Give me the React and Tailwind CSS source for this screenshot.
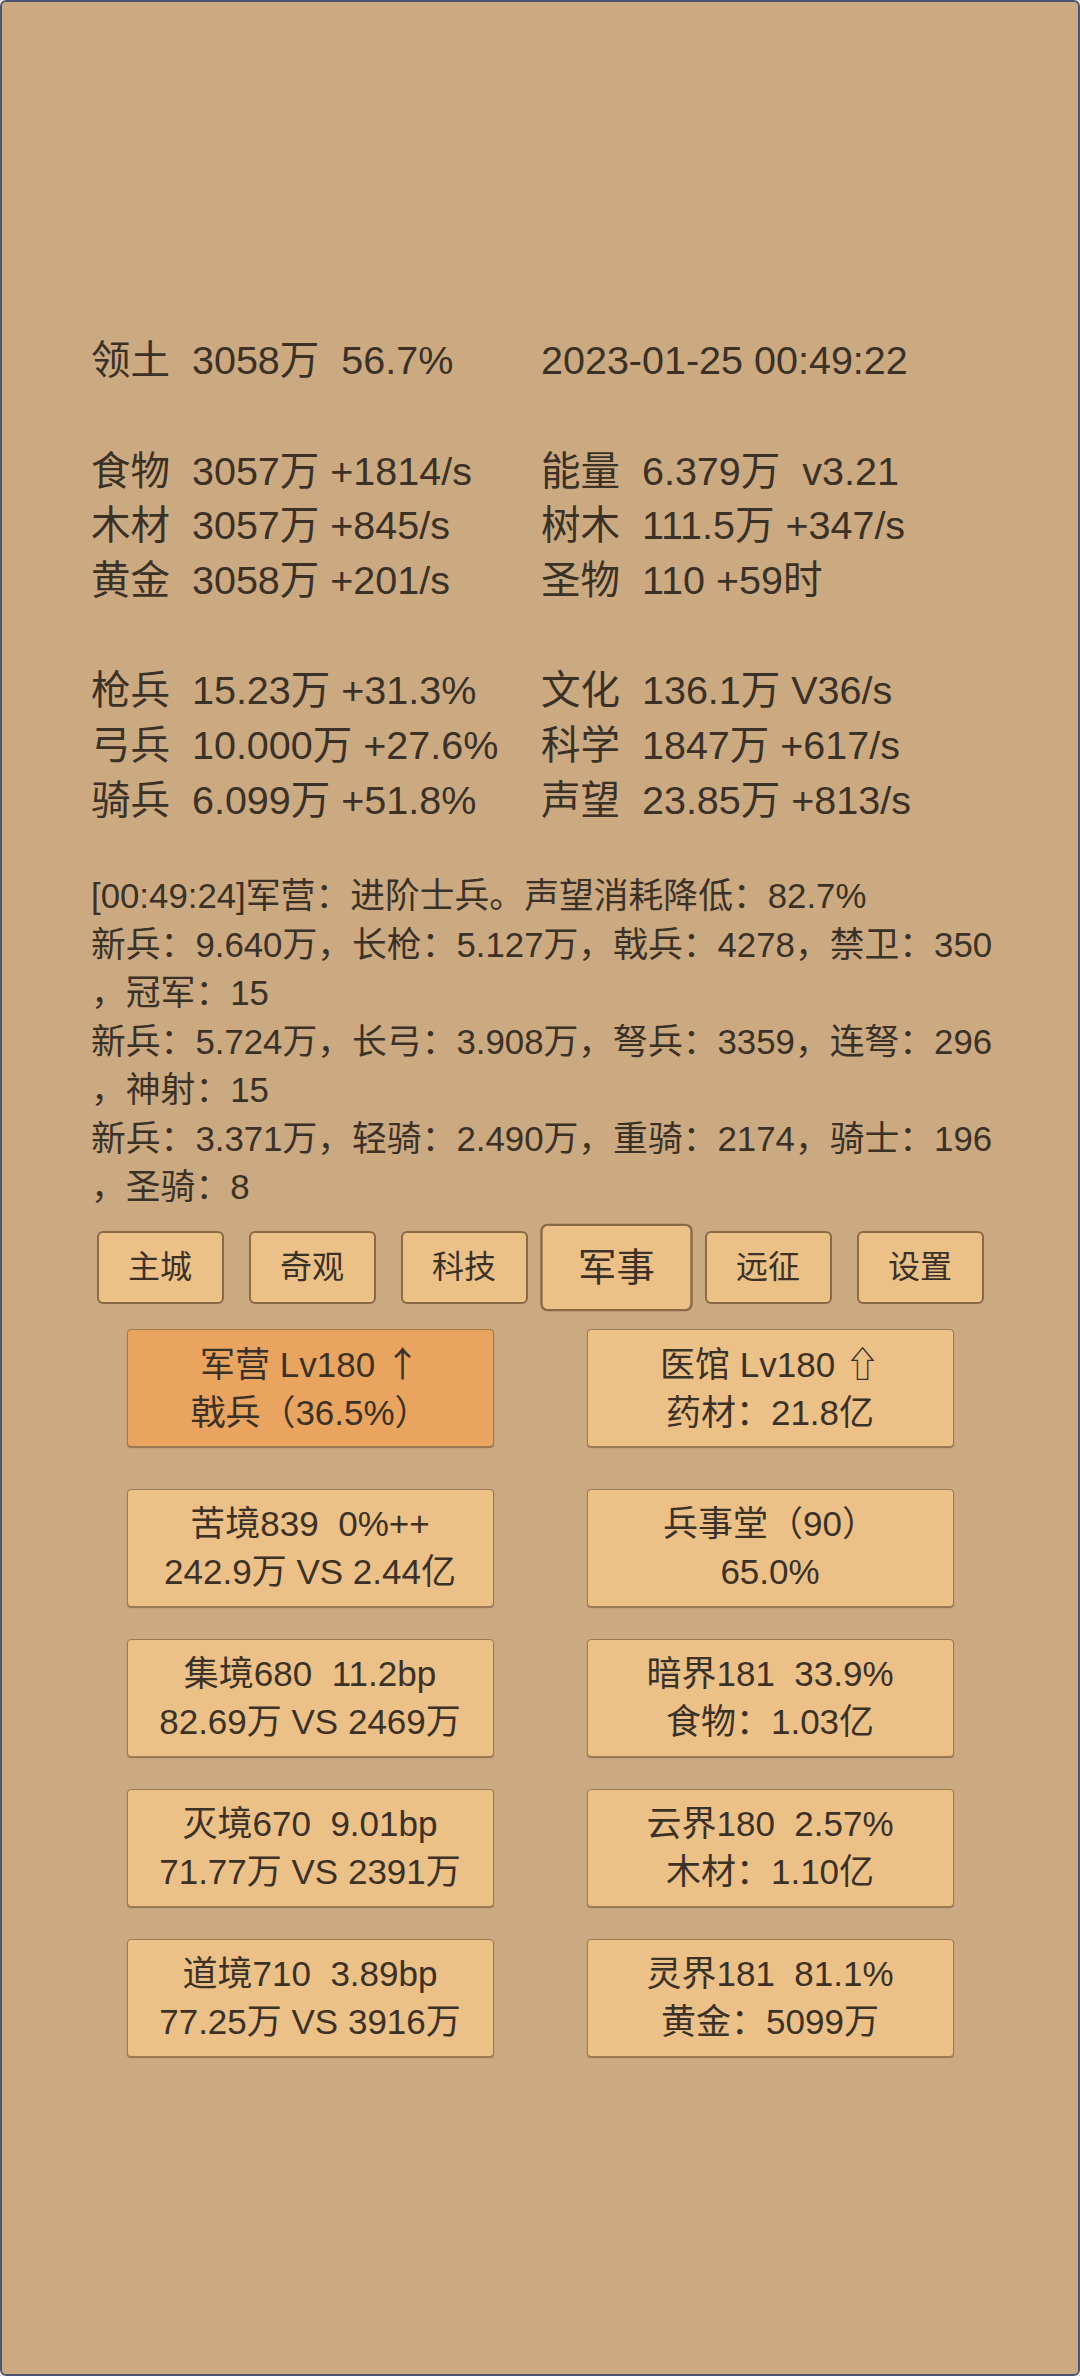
import React from 'react';

const font = { fontFamily: '"Liberation Sans", "Noto Sans CJK SC", sans-serif' };

const stats = [
  [['领土  3058万  56.7%', '2023-01-25 00:49:22']],
  [
    ['食物  3057万 +1814/s', '能量  6.379万  v3.21'],
    ['木材  3057万 +845/s', '树木  111.5万 +347/s'],
    ['黄金  3058万 +201/s', '圣物  110 +59时'],
  ],
  [
    ['枪兵  15.23万 +31.3%', '文化  136.1万 V36/s'],
    ['弓兵  10.000万 +27.6%', '科学  1847万 +617/s'],
    ['骑兵  6.099万 +51.8%', '声望  23.85万 +813/s'],
  ],
];

const logLines = [
  '[00:49:24]军营：进阶士兵。声望消耗降低：82.7%',
  '新兵：9.640万，长枪：5.127万，戟兵：4278，禁卫：350',
  '，冠军：15',
  '新兵：5.724万，长弓：3.908万，弩兵：3359，连弩：296',
  '，神射：15',
  '新兵：3.371万，轻骑：2.490万，重骑：2174，骑士：196',
  '，圣骑：8',
];

const tabs = ['主城', '奇观', '科技', '军事', '远征', '设置'];

const cards = [
  ['军营 Lv180 ', '戟兵（36.5%）', true, '↑'],
  ['医馆 Lv180 ', '药材：21.8亿', false, '⇧'],
  ['苦境839  0%++', '242.9万 VS 2.44亿'],
  ['兵事堂（90）', '65.0%'],
  ['集境680  11.2bp', '82.69万 VS 2469万'],
  ['暗界181  33.9%', '食物：1.03亿'],
  ['灭境670  9.01bp', '71.77万 VS 2391万'],
  ['云界180  2.57%', '木材：1.10亿'],
  ['道境710  3.89bp', '77.25万 VS 3916万'],
  ['灵界181  81.1%', '黄金：5099万'],
];

const Card = ({ top, bottom, active, arrow }) => (
  <div
    className={`h-[118px] flex flex-col items-center justify-center rounded-[4px] border border-[#9c7b52] shadow-[0_1px_1px_rgba(80,50,20,0.45)] text-[35px] leading-[48px] whitespace-pre ${
      active ? 'bg-[#e9a55f]' : 'bg-[#ebc187]'
    }`}
  >
    <div>
      {top}
      {arrow && (
        <span style={{ fontFamily: '"Noto Sans CJK SC", "DejaVu Sans", sans-serif' }}>{arrow}</span>
      )}
    </div>
    <div>{bottom}</div>
  </div>
);

export default function App() {
  return (
    <div
      style={font}
      className="w-[1080px] h-[2376px] overflow-hidden bg-[#cbaa81] border-2 border-[#4d5670] rounded-[6px] text-[#3b3127] pt-[331px]"
    >
      {/* Stats */}
      <div className="pl-[89px] text-[39.5px] leading-[54.6px] whitespace-pre">
        {stats.map((block, i) => (
          <div key={i} className={i > 0 ? 'mt-[56px]' : ''}>
            {block.map(([l, r]) => (
              <div key={l} className="grid grid-cols-[450px_1fr]">
                <div>{l}</div>
                <div>{r}</div>
              </div>
            ))}
          </div>
        ))}
      </div>

      {/* Log */}
      <div className="mt-[45px] pl-[89px] text-[34.8px] leading-[48.5px] whitespace-nowrap">
        {logLines.map((t) => (
          <div key={t}>{t}</div>
        ))}
      </div>

      {/* Tabs */}
      <div className="mt-[19px] flex justify-center gap-[25px]">
        {tabs.map((t) => (
          <div
            key={t}
            className={`w-[127px] h-[73px] flex items-center justify-center rounded-[6px] border-2 border-[#8a6a45] bg-[#ebc187] text-[32px] ${
              t === '军事' ? 'scale-[1.2]' : ''
            }`}
          >
            {t}
          </div>
        ))}
      </div>

      {/* Buildings */}
      <div className="mt-[25px] grid grid-cols-[367px_367px] justify-center gap-x-[93px] gap-y-[32px]">
        {cards.map(([a, b, active, arrow], i) => (
          <div key={a} className={i === 2 || i === 3 ? 'mt-[10px]' : ''}>
            <Card top={a} bottom={b} active={active} arrow={arrow} />
          </div>
        ))}
      </div>
    </div>
  );
}
